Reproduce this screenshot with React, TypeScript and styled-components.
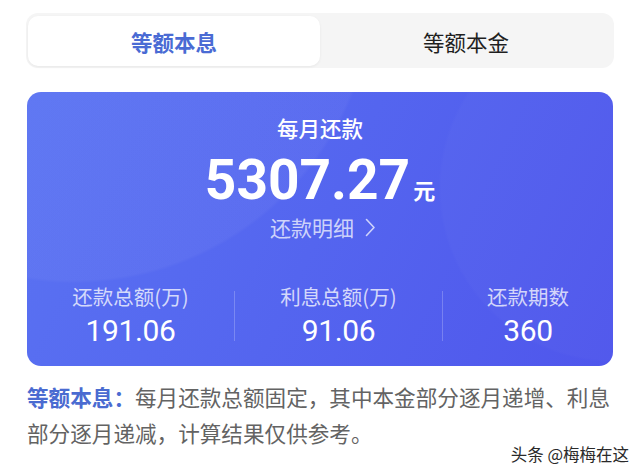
import React from "react";
import styled, { createGlobalStyle } from "styled-components";

const GlobalStyle = createGlobalStyle`
  html, body {
    margin: 0;
    padding: 0;
    background: #ffffff;
  }
  body {
    font-family: "Noto Sans CJK SC", "Noto Sans", sans-serif;
  }
`;

const Page = styled.div`
  position: relative;
  width: 640px;
  height: 471px;
  box-sizing: border-box;
  padding: 13px 26px 0 26px;
  overflow: hidden;
`;

const Tabs = styled.div`
  display: grid;
  grid-template-columns: 1fr 1fr;
  height: 55px;
  box-sizing: border-box;
  padding: 3px 2px 2px 2px;
  background: #f5f5f5;
  border-radius: 12px;
`;

const Tab = styled.div<{ $active?: boolean }>`
  display: flex;
  align-items: center;
  justify-content: center;
  border-radius: 10px;
  font-size: 21.5px;
  font-weight: ${(p) => (p.$active ? 700 : 400)};
  color: ${(p) => (p.$active ? "#4a6bd4" : "#1f1f1f")};
  background: ${(p) => (p.$active ? "#ffffff" : "transparent")};
  box-shadow: ${(p) => (p.$active ? "0 1px 3px rgba(0,0,0,0.06)" : "none")};
`;

const Card = styled.div`
  margin: 24px 1px 0 1px;
  border-radius: 14px;
  padding: 21px 0 17px 0;
  color: #ffffff;
  text-align: center;
  background:
    radial-gradient(circle at 8% -40%, rgba(255, 255, 255, 0.04) 0 45%, transparent 45.5%),
    radial-gradient(circle at 100% 35%, rgba(255, 255, 255, 0.018) 0 28%, transparent 28.5%),
    linear-gradient(115deg, #5a73f2 0%, #5465ef 50%, #4f56ec 100%);
`;

const Title = styled.div`
  font-size: 21.5px;
  font-weight: 500;
  line-height: 30px;
`;

const Amount = styled.div`
  margin-top: 7px;
  font-family: Roboto, "Noto Sans", sans-serif;
  font-size: 55px;
  font-weight: 700;
  line-height: 60px;
`;

const Unit = styled.span`
  font-family: "Noto Sans CJK SC", sans-serif;
  font-size: 22px;
  font-weight: 700;
  line-height: 1;
  margin-left: 3px;
`;

const Detail = styled.div`
  margin-top: 2px;
  padding-left: 6px;
  display: flex;
  align-items: center;
  justify-content: center;
  gap: 11px;
  font-size: 21px;
  line-height: 30px;
  color: rgba(255, 255, 255, 0.72);
`;

const Stats = styled.div`
  margin-top: 40px;
  display: grid;
  grid-template-columns: 207fr 1px 207fr 1px 170fr;
  align-items: center;
`;

const Stat = styled.div`
  display: flex;
  flex-direction: column;
  align-items: center;
`;

const StatLabel = styled.div`
  font-size: 20.5px;
  line-height: 28px;
  color: rgba(255, 255, 255, 0.75);
`;

const StatValue = styled.div`
  margin-top: 3px;
  font-family: Roboto, "Noto Sans", sans-serif;
  font-size: 30px;
  font-weight: 400;
  line-height: 36px;
  letter-spacing: -0.4px;
`;

const Divider = styled.div`
  width: 1px;
  height: 50px;
  background: rgba(255, 255, 255, 0.22);
`;

const Note = styled.p`
  margin: 13px 0 0 1px;
  font-size: 21.6px;
  line-height: 36px;
  color: #636363;
`;

const NoteLead = styled.span`
  color: #4a6bd1;
  font-weight: 700;
`;

const Watermark = styled.div`
  position: absolute;
  right: 11px;
  bottom: 7px;
  font-size: 16.5px;
  line-height: 20px;
  color: #2a2a2a;
  text-shadow: 0 0 2px #ffffff, 0 0 2px #ffffff;
`;

const Chevron = () => (
  <svg width="11" height="19" viewBox="0 0 11 19" fill="none">
    <path d="M1.5 1.5 L9 9.5 L1.5 17.5" stroke="rgba(255,255,255,0.72)" strokeWidth="1.6" strokeLinecap="round" strokeLinejoin="round" />
  </svg>
);

const stats = [
  { label: "还款总额(万)", value: "191.06" },
  { label: "利息总额(万)", value: "91.06" },
  { label: "还款期数", value: "360" },
];

export default function App() {
  return (
    <>
      <GlobalStyle />
      <Page>
        <Tabs>
          <Tab $active>等额本息</Tab>
          <Tab>等额本金</Tab>
        </Tabs>
        <Card>
          <Title>每月还款</Title>
          <Amount>
            5307.27<Unit>元</Unit>
          </Amount>
          <Detail>
            还款明细
            <Chevron />
          </Detail>
          <Stats>
            {stats.map((s, i) => (
              <React.Fragment key={s.label}>
                {i > 0 && <Divider />}
                <Stat>
                  <StatLabel>{s.label}</StatLabel>
                  <StatValue>{s.value}</StatValue>
                </Stat>
              </React.Fragment>
            ))}
          </Stats>
        </Card>
        <Note>
          <NoteLead>等额本息：</NoteLead>
          每月还款总额固定，其中本金部分逐月递增、利息部分逐月递减，计算结果仅供参考。
        </Note>
        <Watermark>头条 @梅梅在这</Watermark>
      </Page>
    </>
  );
}
